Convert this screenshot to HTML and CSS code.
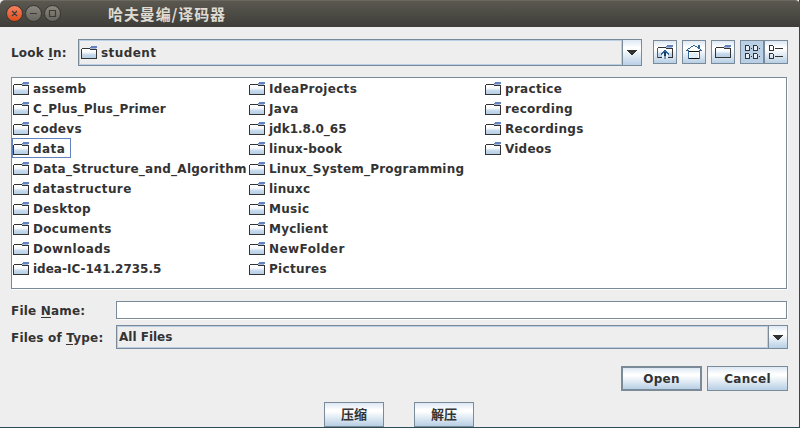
FILE: index.html
```
<!DOCTYPE html>
<html lang="zh-CN">
<head>
<meta charset="utf-8">
<title>哈夫曼编/译码器</title>
<link rel="stylesheet" href="styles.css">
</head>
<body>
<svg class="defs" width="0" height="0" aria-hidden="true">
  <defs>
    <linearGradient id="paper" x1="0" y1="0" x2="0" y2="1">
      <stop offset="0" stop-color="#fff"/><stop offset=".3" stop-color="#f4f8fc"/><stop offset=".6" stop-color="#c4d8eb"/><stop offset="1" stop-color="#b8cfe5"/>
    </linearGradient>
    <symbol id="folder" viewBox="0 0 16 16">
      <path fill="url(#paper)" d="M1 5h14v8H1z"/>
      <path fill="#333" d="M1 3h8v1H1zM0 4h1v10H0zM0 13h16v1H0zM15 4h1v10h-1z"/>
      <path fill="#fff" d="M1 4h8v1H1z"/>
      <path fill="#6382bf" d="M10 1h6v1h-6zM9 2h7v1H9z"/>
      <path fill="#a3b8d9" d="M9 3h6v1H9z"/>
      <path fill="#333" d="M9 4h6v1H9z"/>
    </symbol>
  </defs>
</svg>
<div class="window">
  <header class="titlebar">
    <svg class="controls" width="58" height="20" viewBox="0 0 58 20">
      <defs>
        <linearGradient id="red" x1="0" y1="0" x2="0" y2="1"><stop stop-color="#f68464"/><stop offset="1" stop-color="#df4b19"/></linearGradient>
        <linearGradient id="grey" x1="0" y1="0" x2="0" y2="1"><stop stop-color="#8c897f"/><stop offset="1" stop-color="#65635c"/></linearGradient>
      </defs>
      <g stroke="#34332e">
        <circle cx="10.5" cy="9.5" r="8" fill="url(#red)"/>
        <circle cx="29.5" cy="9.5" r="8" fill="url(#grey)"/>
        <circle cx="48.5" cy="9.5" r="8" fill="url(#grey)"/>
      </g>
      <g fill="none" stroke="#3c3b37" stroke-width="1.2">
        <path d="M8 7l5 5m0-5l-5 5M26 9.5h7M45.5 6.5h6v6h-6z"/>
      </g>
    </svg>
    <h1 class="title">哈夫曼编/译码器</h1>
  </header>
  <main class="content">
    <div class="lookin">
      <label class="lookin-label snug">Look <u>I</u>n:</label>
      <div class="combo combo-dir">
        <div class="combo-value"><svg class="icon"><use href="#folder"/></svg><span class="loose">student</span></div>
        <div class="combo-arrow"><svg width="10" height="5" shape-rendering="crispEdges"><path fill="#333" d="M0 0h10v1H9v1H8v1H7v1H6v1H4V4H3V3H2V2H1V1H0z"/></svg></div>
      </div>
      <div class="tools">
        <button class="tool" aria-label="Up">
          <svg class="icon"><use href="#folder"/><path fill="#e8f0f8" d="M5 10h6v4H5z"/><path fill="#2f6496" d="M0 4h1v10H0zM7 6h2v1H7zM6 7h4v1H6zM5 8h2v1H5zM9 8h2v1H9zM4 9h2v1H4zM10 9h2v1h-2zM4 10h1v1H4zM11 10h1v1h-1z"/><path fill="#173d60" d="M7 8h2v4H7z"/><path fill="#7b9cba" d="M7 12h2v3H7z"/></svg>
        </button>
        <button class="tool" aria-label="Home">
          <svg class="icon"><path fill="#fff" d="M7 2h2l5 5v7H2V7z"/><path fill="#e2ecf6" d="M4 9h8v5H4z"/><path fill="#2f6496" d="M7 1h2v1H7zM5 2h2v1H5zM9 2h2v1H9zM4 3h1v1H4zM11 3h1v1h-1zM12 1h2v4h-2zM2 4h2v1H2zM1 5h1v1H1zM14 5h1v1h-1zM0 6h3v1H0zM13 6h3v1h-3zM2 7h1v8H2zM13 7h1v8h-1z"/><path fill="#111" d="M3 7h10v1H3zM3 14h10v1H3z"/></svg>
        </button>
        <button class="tool" aria-label="New folder"><svg class="icon"><use href="#folder"/></svg></button>
        <div class="views">
          <button class="tool selected" aria-label="List">
            <svg class="icon"><g transform="translate(1)"><path fill="#e6eef7" d="M1 2h3v4H1zM9 2h3v4H9zM1 10h3v4H1zM9 10h3v4H9z"/><path fill="#333" fill-rule="evenodd" d="M0 1h4v1h1v5H0zm1 1v4h3V2zM8 1h4v1h1v5H8zm1 1v4h3V2zM0 9h4v1h1v5H0zm1 1v4h3v-4zM8 9h4v1h1v5H8zm1 1v4h3v-4zM6 4h1v1H6zM14 4h1v1h-1zM6 12h1v1H6zM14 12h1v1h-1z"/></g></svg>
          </button>
          <button class="tool" aria-label="Details">
            <svg class="icon"><path fill="#333" fill-rule="evenodd" d="M1 1h4v1h1v5H1zm1 1v4h3V2zM1 9h4v1h1v5H1zm1 1v4h3v-4zM7 4h8v1H7zM7 12h8v1H7z"/></svg>
          </button>
        </div>
      </div>
    </div>

    <div class="files">
      <ul class="column">
        <li><svg class="icon"><use href="#folder"/></svg><span>assemb</span></li>
        <li><svg class="icon"><use href="#folder"/></svg><span class="snug">C_Plus_Plus_Primer</span></li>
        <li><svg class="icon"><use href="#folder"/></svg><span>codevs</span></li>
        <li class="focused"><svg class="icon"><use href="#folder"/></svg><span class="loose">data</span></li>
        <li><svg class="icon"><use href="#folder"/></svg><span class="medium">Data_Structure_and_Algorithm</span></li>
        <li><svg class="icon"><use href="#folder"/></svg><span class="loose">datastructure</span></li>
        <li><svg class="icon"><use href="#folder"/></svg><span>Desktop</span></li>
        <li><svg class="icon"><use href="#folder"/></svg><span>Documents</span></li>
        <li><svg class="icon"><use href="#folder"/></svg><span class="loose">Downloads</span></li>
        <li><svg class="icon"><use href="#folder"/></svg><span class="tight">idea-IC-141.2735.5</span></li>
      </ul>
      <ul class="column">
        <li><svg class="icon"><use href="#folder"/></svg><span>IdeaProjects</span></li>
        <li><svg class="icon"><use href="#folder"/></svg><span>Java</span></li>
        <li><svg class="icon"><use href="#folder"/></svg><span class="tight">jdk1.8.0_65</span></li>
        <li><svg class="icon"><use href="#folder"/></svg><span class="snug">linux-book</span></li>
        <li><svg class="icon"><use href="#folder"/></svg><span class="snug">Linux_System_Programming</span></li>
        <li><svg class="icon"><use href="#folder"/></svg><span class="snug">linuxc</span></li>
        <li><svg class="icon"><use href="#folder"/></svg><span>Music</span></li>
        <li><svg class="icon"><use href="#folder"/></svg><span class="snug">Myclient</span></li>
        <li><svg class="icon"><use href="#folder"/></svg><span class="loose">NewFolder</span></li>
        <li><svg class="icon"><use href="#folder"/></svg><span>Pictures</span></li>
      </ul>
      <ul class="column">
        <li><svg class="icon"><use href="#folder"/></svg><span>practice</span></li>
        <li><svg class="icon"><use href="#folder"/></svg><span>recording</span></li>
        <li><svg class="icon"><use href="#folder"/></svg><span>Recordings</span></li>
        <li><svg class="icon"><use href="#folder"/></svg><span class="snug">Videos</span></li>
      </ul>
    </div>

    <div class="field">
      <label class="field-label snug">File <u>N</u>ame:</label>
      <div class="textbox"></div>
    </div>
    <div class="field type">
      <label class="field-label snug">Files of <u>T</u>ype:</label>
      <div class="combo combo-type">
        <div class="combo-value"><span class="tight">All Files</span></div>
        <div class="combo-arrow"><svg width="10" height="5" shape-rendering="crispEdges"><path fill="#333" d="M0 0h10v1H9v1H8v1H7v1H6v1H4V4H3V3H2V2H1V1H0z"/></svg></div>
      </div>
    </div>
    <div class="actions">
      <button class="btn default">Open</button>
      <button class="btn">Cancel</button>
    </div>
  </main>
  <footer class="bottom">
    <button class="btn small">压缩</button>
    <button class="btn small">解压</button>
  </footer>
</div>
</body>
</html>
```
FILE: styles.css
```
* { box-sizing: border-box; }
body {
  margin: 0;
  background: #2c4a54;
  font: bold 12px/14px "DejaVu Sans", "Noto Sans CJK SC", sans-serif;
  letter-spacing: .3px;
  color: #333;
}
.tight { letter-spacing: 0; }
.snug { letter-spacing: .2px; }
.medium { letter-spacing: .26px; }
.loose { letter-spacing: .42px; }
.defs { position: absolute; }
.window {
  width: 800px;
  height: 428px;
  display: flex;
  flex-direction: column;
  border: solid #2c4a54;
  border-width: 0 1px 1px 0;
  background: #eee;
}
.titlebar {
  height: 27px;
  width: 800px;
  flex: none;
  display: flex;
  align-items: center;
  padding-left: 4px;
  background: linear-gradient(#5a584f, #3e3d39);
  border-top: 1px solid #69675e;
  border-radius: 5px 5px 0 0;
}
.controls { flex: none; }
.title {
  margin: 0 0 0 46px;
  font: bold 15px/20px "Noto Sans CJK SC", sans-serif;
  letter-spacing: .9px;
  color: #dfdbd2;
}
.content {
  display: flex;
  flex-direction: column;
  padding: 12px 11px 0;
}
.lookin { display: flex; height: 27px; }
.lookin-label { width: 67px; flex: none; padding-top: 7px; }
u { text-decoration: none; box-shadow: 0 -1px 0 #333 inset; }
.combo {
  display: flex;
  border: 1px solid #7a8a99;
}
.combo-dir { width: 564px; height: 27px; }
.combo-value {
  flex: 1;
  display: flex;
  align-items: center;
  gap: 4px;
  border: 1px solid #b8cfe5;
  padding-left: 1px;
}
.combo-arrow {
  width: 19px;
  display: flex;
  align-items: center;
  justify-content: center;
  border-left: 1px solid #7a8a99;
}
.combo-arrow, .tool, .btn {
  background-image: linear-gradient(#dde8f3 0%, #fff 30%, #fff 36%, #b8cfe5 100%);
}
.icon { width: 16px; height: 16px; flex: none; display: block; shape-rendering: crispEdges; }
.tools { display: flex; gap: 5px; margin: 1px 0 0 11px; }
.tool {
  width: 24px;
  height: 24px;
  padding: 3px;
  border: 1px solid #7a8a99;
}
.views { display: flex; }
.selected { background: #b8cfe5; }
.files {
  display: flex;
  height: 212px;
  margin-top: 11px;
  width: 776px;
  border: 1px solid #7a8a99;
  box-shadow: 1px 1px 0 #fff;
  background: #fff;
}
.column { list-style: none; margin: 0; padding: 0; width: 236px; }
.column li {
  display: flex;
  align-items: center;
  gap: 4px;
  width: max-content;
  height: 20px;
  border: 1px solid transparent;
  padding-right: 5px;
  white-space: nowrap;
}
.column .icon { margin-top: 2px; }
.column span { padding-top: 2px; }
.column li.focused { border-color: #6382bf; }
.field { display: flex; margin-top: 12px; height: 18px; }
.field-label { width: 105px; flex: none; padding-top: 3px; }
.textbox {
  width: 671px;
  height: 18px;
  background: #fff;
  border: 1px solid #7a8a99;
  box-shadow: 1px 1px 0 #fff;
}
.type { margin-top: 6px; height: 24px; }
.type .field-label { padding-top: 6px; }
.combo-type { width: 672px; height: 24px; }
.actions { display: flex; justify-content: flex-end; gap: 5px; margin-top: 17px; }
.btn {
  width: 81px;
  height: 25px;
  padding: 0;
  border: 1px solid #7a8a99;
  font: inherit;
  letter-spacing: inherit;
  color: #333;
}
.default { border-width: 2px; }
.bottom { display: flex; gap: 30px; margin: 11px 0 0 324px; }
.small { width: 60px; font-size: 13px; letter-spacing: 0; }
```
